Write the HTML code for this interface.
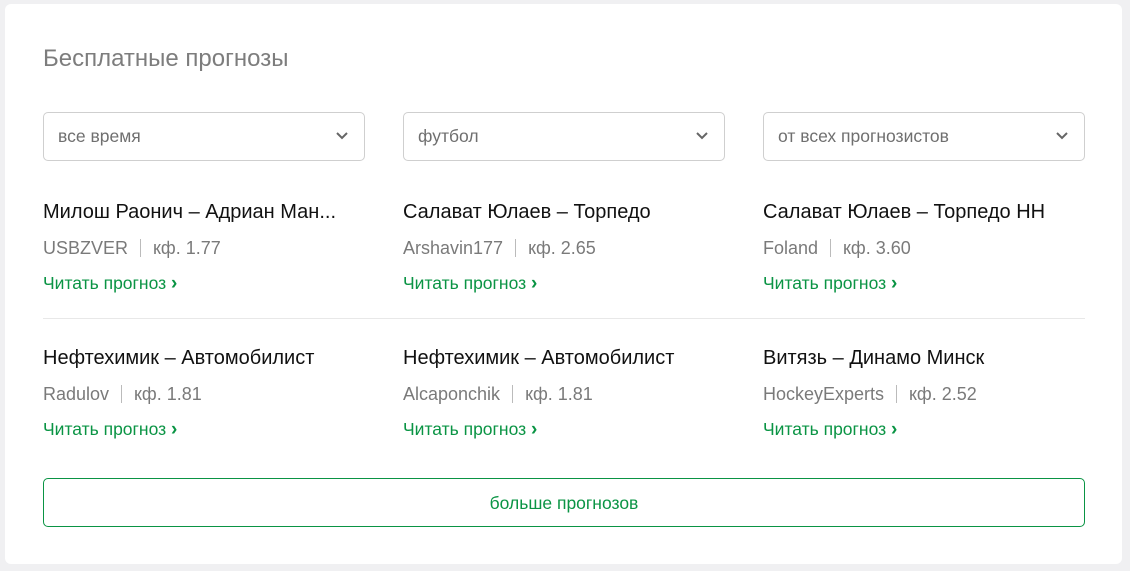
<!DOCTYPE html>
<html><head><meta charset="utf-8"><style>
body{margin:0;width:1130px;height:571px;background:#f0f0f2;font-family:"Liberation Sans",sans-serif;position:relative;overflow:hidden}
.card{position:absolute;left:5px;top:4px;width:1117px;height:560px;background:#fff;border-radius:6px}
h1{position:absolute;left:43px;top:44px;margin:0;font-size:24px;font-weight:normal;color:#7d7d7d;line-height:30px}
.sel{position:absolute;top:112px;width:320px;height:47px;border:1px solid #cfcfcf;border-radius:5px;font-size:17.5px;color:#6f6f6f;line-height:47px}
.sel span{margin-left:14px}
.sel svg{position:absolute;right:16px;top:19px}
.it{position:absolute;width:322px}
.t{font-size:20px;color:#111;line-height:24px;white-space:nowrap;overflow:hidden}
.m{font-size:18px;color:#7a7a7a;margin-top:14px;line-height:20px}
.m i{display:inline-block;width:1px;height:18px;background:#bbb;margin:0 12px;vertical-align:-3px}
.l{font-size:17.5px;color:#0a9444;margin-top:15px;line-height:20px}
.l b{font-size:19px}
.div{position:absolute;left:43px;top:318px;width:1042px;height:1px;background:#e8e8e8}
.btn{position:absolute;left:43px;top:478px;width:1040px;height:47px;border:1px solid #0a9444;border-radius:5px;text-align:center;line-height:49px;color:#0a9444;font-size:17.5px}
</style></head><body>
<div class="card"></div>
<h1>Бесплатные прогнозы</h1>
<div class="sel" style="left:43px"><span>все время</span><svg width="12" height="8"><path d="M1 1l5 5 5-5" stroke="#666" stroke-width="2" fill="none"/></svg></div>
<div class="sel" style="left:403px"><span>футбол</span><svg width="12" height="8"><path d="M1 1l5 5 5-5" stroke="#666" stroke-width="2" fill="none"/></svg></div>
<div class="sel" style="left:763px"><span>от всех прогнозистов</span><svg width="12" height="8"><path d="M1 1l5 5 5-5" stroke="#666" stroke-width="2" fill="none"/></svg></div>

<div class="it" style="left:43px;top:200px"><div class="t">Милош Раонич – Адриан Ман...</div><div class="m">USBZVER<i></i>кф. 1.77</div><div class="l">Читать прогноз <b>›</b></div></div>
<div class="it" style="left:403px;top:200px"><div class="t">Салават Юлаев – Торпедо</div><div class="m">Arshavin177<i></i>кф. 2.65</div><div class="l">Читать прогноз <b>›</b></div></div>
<div class="it" style="left:763px;top:200px"><div class="t">Салават Юлаев – Торпедо НН</div><div class="m">Foland<i></i>кф. 3.60</div><div class="l">Читать прогноз <b>›</b></div></div>
<div class="div"></div>
<div class="it" style="left:43px;top:346px"><div class="t">Нефтехимик – Автомобилист</div><div class="m">Radulov<i></i>кф. 1.81</div><div class="l">Читать прогноз <b>›</b></div></div>
<div class="it" style="left:403px;top:346px"><div class="t">Нефтехимик – Автомобилист</div><div class="m">Alcaponchik<i></i>кф. 1.81</div><div class="l">Читать прогноз <b>›</b></div></div>
<div class="it" style="left:763px;top:346px"><div class="t">Витязь – Динамо Минск</div><div class="m">HockeyExperts<i></i>кф. 2.52</div><div class="l">Читать прогноз <b>›</b></div></div>
<div class="btn">больше прогнозов</div>
</body></html>
